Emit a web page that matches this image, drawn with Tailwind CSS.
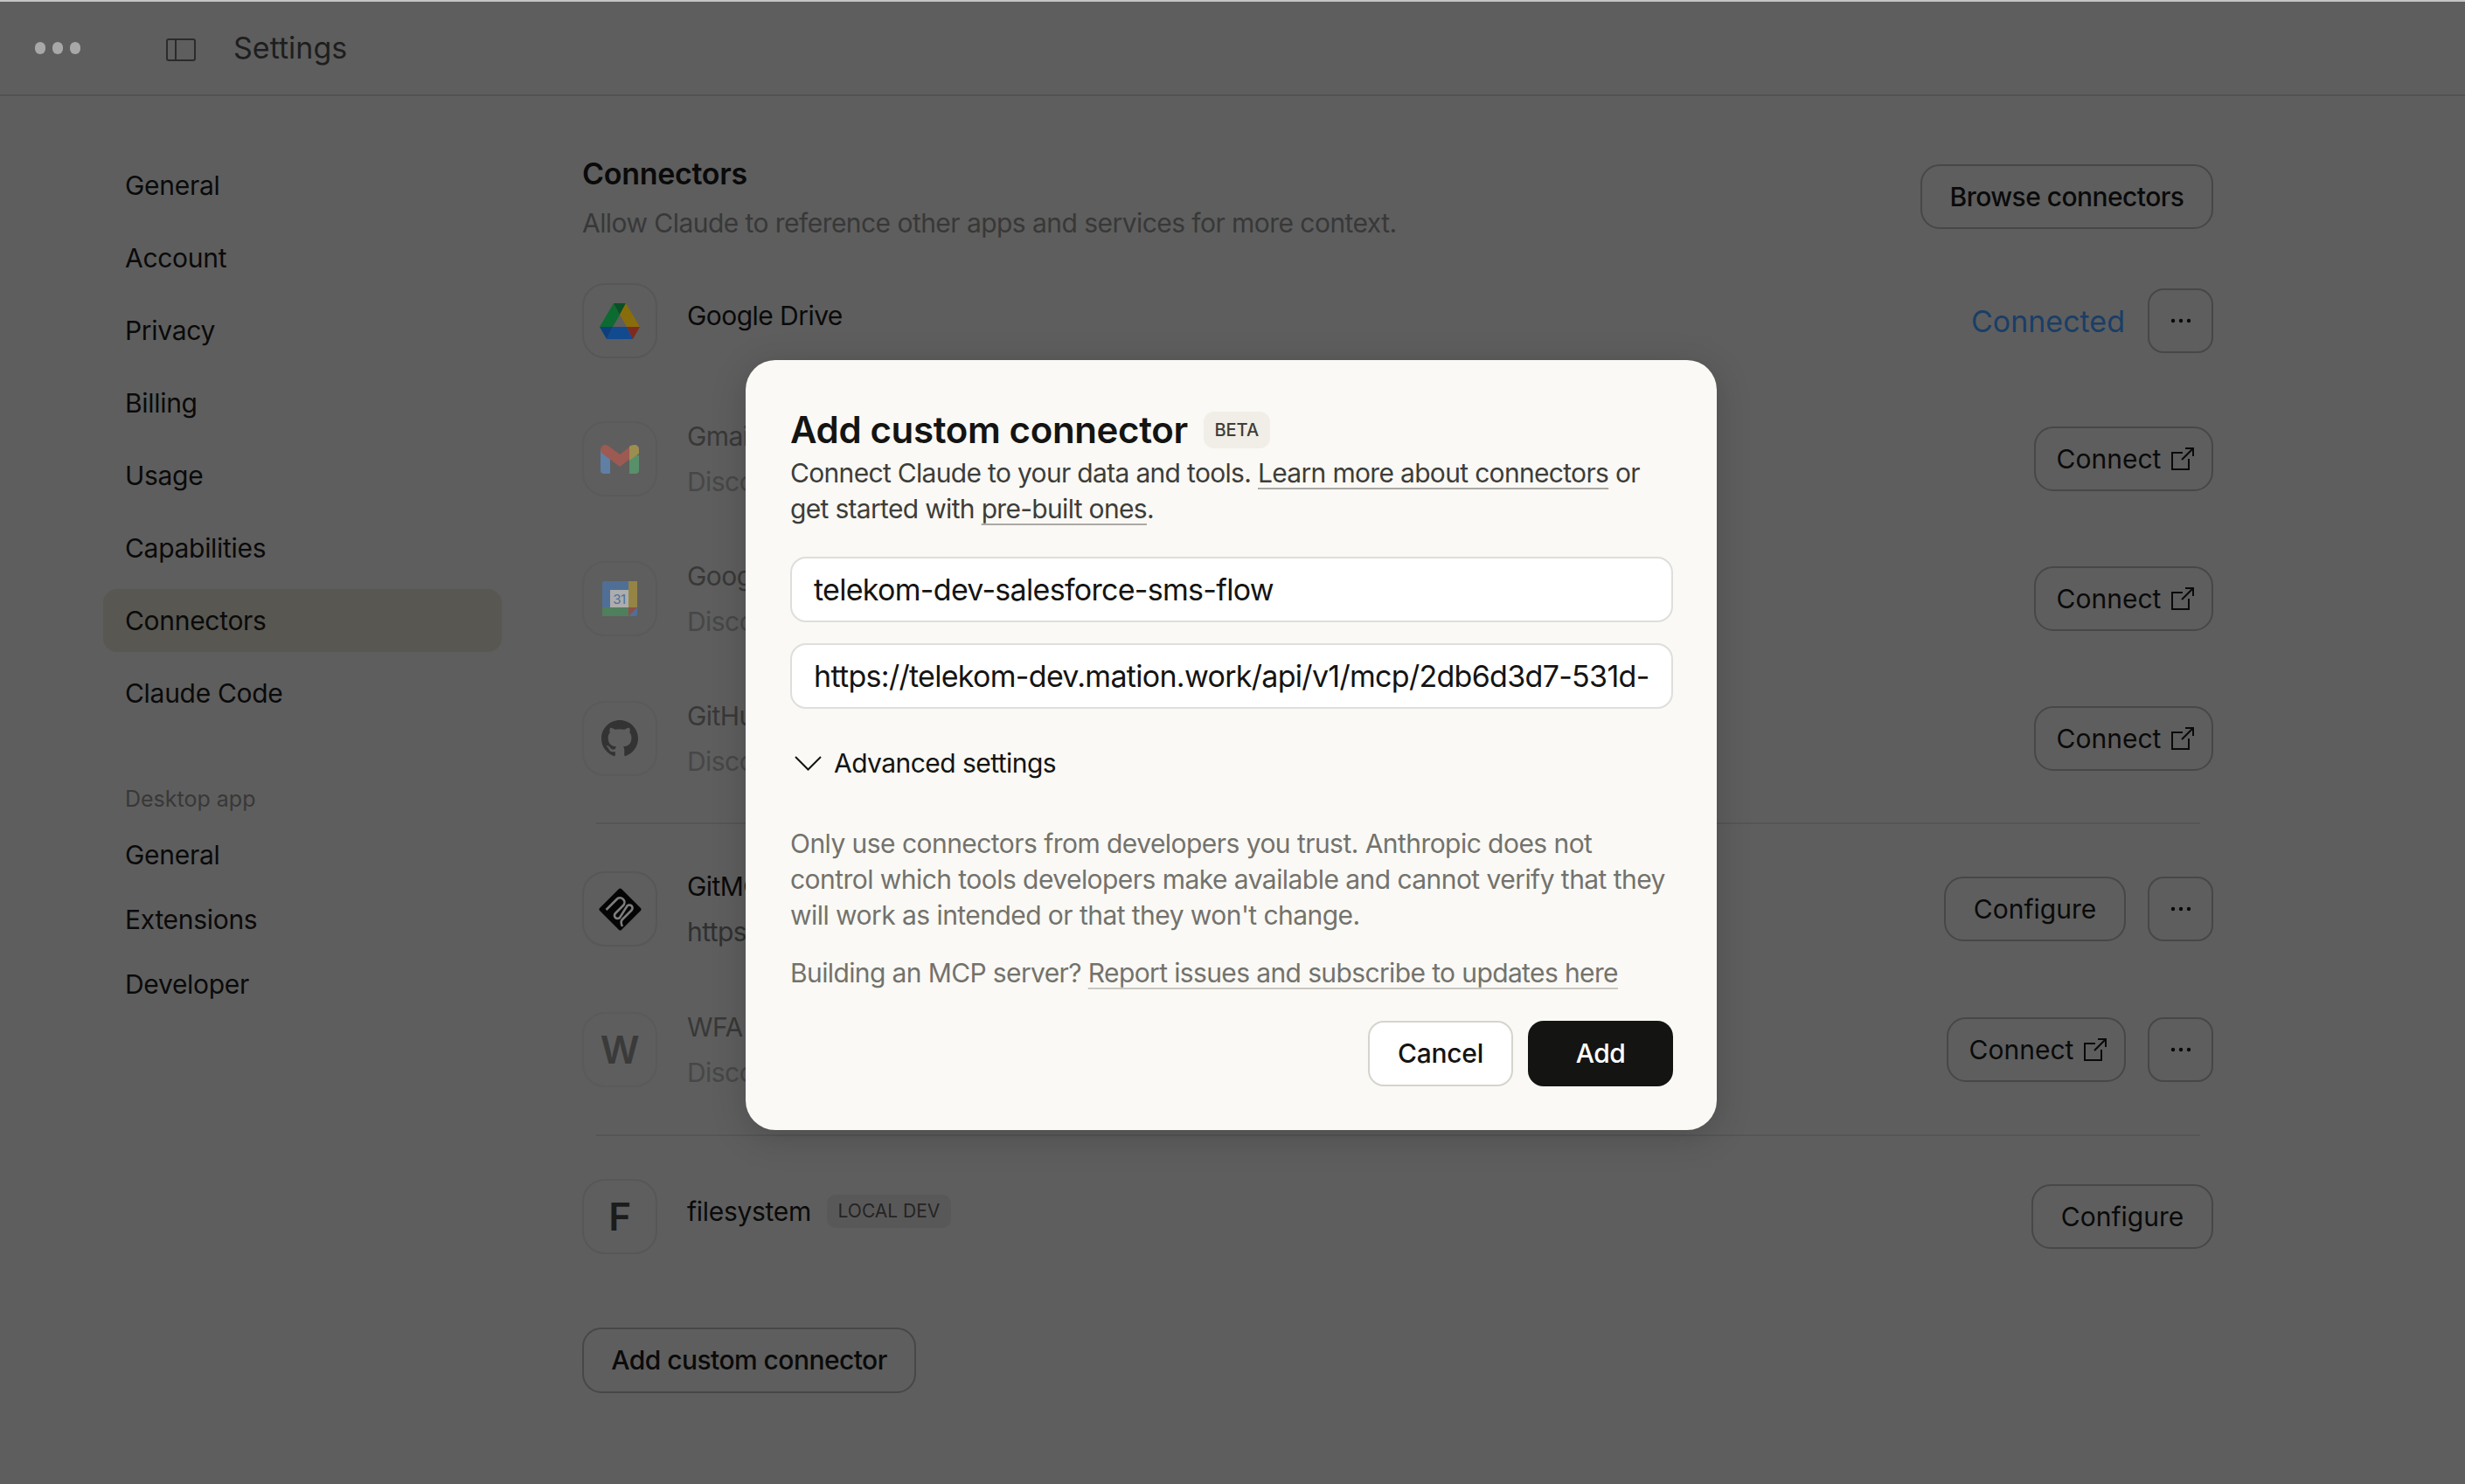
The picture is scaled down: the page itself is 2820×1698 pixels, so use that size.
<!DOCTYPE html>
<html lang="en">
<head>
<meta charset="utf-8">
<title>Settings</title>
<script src="https://cdn.jsdelivr.net/npm/@tailwindcss/browser@4"></script>
</head>
<body class="m-0 overflow-hidden bg-[#5e5e5e] font-['Inter','Noto_Sans',sans-serif] tracking-[-0.55px] text-[#0a0a0a]">
<div class="relative flex h-[1698px] w-[2820px] flex-col border-t-2 border-[#c4c4c4]">

  <header class="flex h-[108px] shrink-0 items-center border-b-2 border-[#525252]">
    <div class="ml-[40px] flex w-[150px] gap-[8px]">
      <span class="h-[14px] w-[12px] rounded-full bg-[#a8a8a8]"></span>
      <span class="h-[14px] w-[12px] rounded-full bg-[#a8a8a8]"></span>
      <span class="h-[14px] w-[12px] rounded-full bg-[#a8a8a8]"></span>
    </div>
    <svg class="mt-[4px] h-[26px] w-[34px]" viewBox="0 0 34 26" fill="none" stroke="#2b2b2b" stroke-width="2"><rect x="1" y="1" width="32" height="24" rx="2"/><path d="M11 1v24"/></svg>
    <span class="ml-[43px] text-[34px] leading-none tracking-[0px] text-[#1e1e1e]">Settings</span>
  </header>

  <div class="flex flex-1">
    <nav class="w-[666px] shrink-0 pl-[118px] pt-[66px] text-[30px] tracking-[-0.3px]">
      <div class="w-[456px]">
        <a class="flex h-[72px] items-center pl-[25px]">General</a>
        <a class="mt-[11px] flex h-[72px] items-center pl-[25px]">Account</a>
        <a class="mt-[11px] flex h-[72px] items-center pl-[25px]">Privacy</a>
        <a class="mt-[11px] flex h-[72px] items-center pl-[25px]">Billing</a>
        <a class="mt-[11px] flex h-[72px] items-center pl-[25px]">Usage</a>
        <a class="mt-[11px] flex h-[72px] items-center pl-[25px]">Capabilities</a>
        <a class="mt-[11px] flex h-[72px] items-center rounded-[16px] bg-[#585751] pl-[25px]">Connectors</a>
        <a class="mt-[11px] flex h-[72px] items-center pl-[25px]">Claude Code</a>
        <p class="mt-[69px] pl-[25px] text-[25px] leading-[32px] tracking-[0px] text-[#383838]">Desktop app</p>
        <a class="mt-[16px] flex h-[64px] items-center pl-[25px]">General</a>
        <a class="mt-[10px] flex h-[64px] items-center pl-[25px]">Extensions</a>
        <a class="mt-[10px] flex h-[64px] items-center pl-[25px]">Developer</a>
      </div>
    </nav>

    <main class="w-[1866px] shrink-0 pt-[78px]">
      <div class="flex h-[74px] items-start justify-between">
        <div class="-mt-[9px]">
          <h1 class="text-[34px] font-semibold leading-[40px] tracking-[-0.3px]">Connectors</h1>
          <p class="mt-[16px] text-[30px] leading-[40px] text-[#383838]">Allow Claude to reference other apps and services for more context.</p>
        </div>
        <button class="h-[74px] w-[335px] rounded-[22px] border-2 border-[#474747] text-[30px] font-medium">Browse connectors</button>
      </div>

      <div class="mt-[62px] flex h-[86px] items-center justify-between">
        <div class="flex items-center">
          <div class="flex h-[86px] w-[86px] items-center justify-center rounded-[26px] border-2 border-[#575757]">
            <svg class="h-[41px] w-[46px]" viewBox="0 0 46 41"><path d="M16 0 0 27h15l8-14z" fill="#0b6b30"/><path d="M16 0h14l-7 13z" fill="#0a4f26"/><path d="M30 0l16 27H31l-8-14z" fill="#8a6d0b"/><path d="M8 41l7-14h16l7 14z" fill="#124a90"/><path d="M0 27h15L8 41z" fill="#0d3f7c"/><path d="M31 27h15l-8 14z" fill="#7f2a1e"/></svg>
          </div>
          <span class="mb-[12px] ml-[34px] text-[30px] leading-[40px]">Google Drive</span>
        </div>
        <div class="flex items-center gap-[26px]">
          <span class="text-[34px] tracking-[0px] text-[#1a3e66]">Connected</span>
          <button class="flex h-[74px] w-[75px] items-center justify-center rounded-[18px] border-2 border-[#474747]"><svg class="h-[6px] w-[24px]" viewBox="0 0 24 6" fill="#0a0a0a"><circle cx="3" cy="3" r="2.2"/><circle cx="12" cy="3" r="2.2"/><circle cx="21" cy="3" r="2.2"/></svg></button>
        </div>
      </div>

      <div class="mt-[72px] flex h-[86px] items-center justify-between">
        <div class="flex items-center">
          <div class="flex h-[86px] w-[86px] items-center justify-center rounded-[26px] border-2 border-[#5a5a5a]">
            <svg class="h-[33px] w-[44px]" viewBox="0 0 44 33"><path d="M0 6h11v27H4q-4 0-4-4z" fill="#5f7fa5"/><path d="M33 12h11v17q0 4-4 4h-7z" fill="#58906a"/><path d="M5.500 5.500 22 18 38.500 5.500" fill="none" stroke="#9c5a52" stroke-width="11" stroke-linecap="round" stroke-linejoin="miter"/><path d="M33 1.500Q36 0 38.500 0 44 0 44 5.500V10l-11 8z" fill="#9c8e50"/></svg>
          </div>
          <div class="ml-[34px] text-[30px] leading-[40px] text-[#383838]"><p>Gmail</p><p class="mt-[12px] text-[#474747]">Discover</p></div>
        </div>
        <button class="flex h-[74px] w-[205px] items-center justify-center gap-[12px] rounded-[22px] border-2 border-[#474747] pl-[4px] text-[30px] tracking-[0px]">Connect <svg class="h-[26px] w-[26px]" viewBox="0 0 26 26" fill="none" stroke="#0a0a0a" stroke-width="2"><path d="M13 6H1v19h19V13M12 14 25 1M16 1h9v9"/></svg></button>
      </div>

      <div class="mt-[74px] flex h-[86px] items-center justify-between">
        <div class="flex items-center">
          <div class="flex h-[86px] w-[86px] items-center justify-center rounded-[26px] border-2 border-[#5a5a5a]">
            <svg class="h-[40px] w-[40px]" viewBox="0 0 40 40"><rect width="40" height="40" rx="2" fill="#4f6f96"/><rect x="30" width="10" height="30" fill="#958444"/><rect y="30" width="30" height="10" fill="#4f7f5c"/><path d="M30 30h10L30 40z" fill="#8f4f46"/><rect x="9" y="10" width="21" height="20" fill="#adadad"/><text x="19.500" y="26" text-anchor="middle" font-size="15" font-family="Inter" fill="#4f719d">31</text></svg>
          </div>
          <div class="ml-[34px] text-[30px] leading-[40px] text-[#383838]"><p>Google Calendar</p><p class="mt-[12px] text-[#474747]">Discover</p></div>
        </div>
        <button class="flex h-[74px] w-[205px] items-center justify-center gap-[12px] rounded-[22px] border-2 border-[#474747] pl-[4px] text-[30px] tracking-[0px]">Connect <svg class="h-[26px] w-[26px]" viewBox="0 0 26 26" fill="none" stroke="#0a0a0a" stroke-width="2"><path d="M13 6H1v19h19V13M12 14 25 1M16 1h9v9"/></svg></button>
      </div>

      <div class="mt-[74px] flex h-[86px] items-center justify-between">
        <div class="flex items-center">
          <div class="flex h-[86px] w-[86px] items-center justify-center rounded-[26px] border-2 border-[#5a5a5a]">
            <svg class="h-[42px] w-[42px]" viewBox="0 0 16 16" fill="#333"><path d="M8 0C3.58 0 0 3.58 0 8c0 3.54 2.29 6.53 5.47 7.59.4.07.55-.17.55-.38 0-.19-.01-.82-.01-1.49-2.01.37-2.53-.49-2.69-.94-.09-.23-.48-.94-.82-1.13-.28-.15-.68-.52-.01-.53.63-.01 1.08.58 1.23.82.72 1.21 1.87.87 2.33.66.07-.52.28-.87.51-1.07-1.78-.2-3.64-.89-3.64-3.95 0-.87.31-1.59.82-2.15-.08-.2-.36-1.02.08-2.12 0 0 .67-.21 2.2.82.64-.18 1.32-.27 2-.27s1.36.09 2 .27c1.53-1.04 2.2-.82 2.2-.82.44 1.1.16 1.92.08 2.12.51.56.82 1.27.82 2.15 0 3.07-1.87 3.75-3.65 3.95.29.25.54.73.54 1.48 0 1.07-.01 1.93-.01 2.2 0 .21.15.46.55.38A8.01 8.01 0 0 0 16 8c0-4.42-3.58-8-8-8z"/></svg>
          </div>
          <div class="ml-[34px] text-[30px] leading-[40px] text-[#383838]"><p>GitHub</p><p class="mt-[12px] text-[#474747]">Discover</p></div>
        </div>
        <button class="flex h-[74px] w-[205px] items-center justify-center gap-[12px] rounded-[22px] border-2 border-[#474747] pl-[4px] text-[30px] tracking-[0px]">Connect <svg class="h-[26px] w-[26px]" viewBox="0 0 26 26" fill="none" stroke="#0a0a0a" stroke-width="2"><path d="M13 6H1v19h19V13M12 14 25 1M16 1h9v9"/></svg></button>
      </div>

      <div class="ml-[16px] mr-[15px] mt-[53px] h-[2px] bg-[#555555]"></div>

      <div class="mt-[54px] flex h-[86px] items-center justify-between">
        <div class="flex items-center">
          <div class="flex h-[86px] w-[86px] items-center justify-center rounded-[26px] border-2 border-[#575757]">
            <svg class="h-[49px] w-[49px]" viewBox="0 0 49 49"><path d="M24.500 2.500 46.500 24.500 24.500 46.500 2.500 24.500z" fill="#050505" stroke="#050505" stroke-width="4" stroke-linejoin="round"/><path d="M8.500 25 20.500 13a5 5 0 0 1 7.500 7L19 29a3.500 3.500 0 0 0 5 5L32.500 20.500a3.500 3.500 0 0 1 5 5L27 36c-2 2-1.500 5 0 8" fill="none" stroke="#7d7d7d" stroke-width="2.600"/></svg>
          </div>
          <div class="ml-[34px] text-[30px] leading-[40px]"><p>GitMCP</p><p class="mt-[12px] text-[#303030]">https://gitmcp.io</p></div>
        </div>
        <div class="flex items-center gap-[25px]">
          <button class="h-[74px] w-[208px] rounded-[22px] border-2 border-[#474747] text-[30px] tracking-[0px]">Configure</button>
          <button class="flex h-[74px] w-[75px] items-center justify-center rounded-[18px] border-2 border-[#474747]"><svg class="h-[6px] w-[24px]" viewBox="0 0 24 6" fill="#0a0a0a"><circle cx="3" cy="3" r="2.2"/><circle cx="12" cy="3" r="2.2"/><circle cx="21" cy="3" r="2.2"/></svg></button>
        </div>
      </div>

      <div class="mt-[75px] flex h-[86px] items-center justify-between">
        <div class="flex items-center">
          <div class="flex h-[86px] w-[86px] items-center justify-center rounded-[26px] border-2 border-[#5a5a5a] text-[44px] font-semibold text-[#3a3a3a]">W</div>
          <div class="ml-[34px] text-[30px] leading-[40px] text-[#383838]"><p>WFA</p><p class="mt-[12px] text-[#474747]">Discover</p></div>
        </div>
        <div class="flex items-center gap-[25px]">
          <button class="flex h-[74px] w-[205px] items-center justify-center gap-[12px] rounded-[22px] border-2 border-[#474747] pl-[4px] text-[30px] tracking-[0px]">Connect <svg class="h-[26px] w-[26px]" viewBox="0 0 26 26" fill="none" stroke="#0a0a0a" stroke-width="2"><path d="M13 6H1v19h19V13M12 14 25 1M16 1h9v9"/></svg></button>
          <button class="flex h-[74px] w-[75px] items-center justify-center rounded-[18px] border-2 border-[#474747]"><svg class="h-[6px] w-[24px]" viewBox="0 0 24 6" fill="#0a0a0a"><circle cx="3" cy="3" r="2.2"/><circle cx="12" cy="3" r="2.2"/><circle cx="21" cy="3" r="2.2"/></svg></button>
        </div>
      </div>

      <div class="ml-[16px] mr-[15px] mt-[54px] h-[2px] bg-[#555555]"></div>

      <div class="mt-[49px] flex h-[86px] items-center justify-between">
        <div class="flex items-center">
          <div class="flex h-[86px] w-[86px] items-center justify-center rounded-[26px] border-2 border-[#575757] text-[44px] font-semibold text-[#1c1c1c]">F</div>
          <span class="mb-[12px] ml-[34px] text-[30px] leading-[40px] tracking-[-0.3px]">filesystem</span>
          <span class="mb-[12px] ml-[18px] flex h-[38px] w-[142px] items-center justify-center rounded-[10px] bg-[#595858] text-[21px] tracking-[0px] text-[#242424]">LOCAL DEV</span>
        </div>
        <button class="h-[74px] w-[208px] rounded-[22px] border-2 border-[#474747] text-[30px] tracking-[0px]">Configure</button>
      </div>

      <button class="mt-[84px] h-[75px] w-[382px] rounded-[22px] border-2 border-[#474747] text-[30px] font-medium">Add custom connector</button>
    </main>
  </div>

  <section class="absolute left-[853px] top-[410px] h-[881px] w-[1111px] rounded-[34px] bg-[#faf9f5] pl-[51px] pr-[50px] shadow-[0_8px_40px_rgba(0,0,0,0.18)]">
    <div class="flex items-center pt-[59px]">
      <h2 class="text-[42px] font-semibold leading-[42px] tracking-[-0.36px] text-[#141413]">Add custom connector</h2>
      <span class="ml-[18px] flex h-[42px] w-[76px] items-center justify-center rounded-[12px] bg-[#f0eee6] text-[20px] font-medium tracking-[0px] text-[#3d3d3a]">BETA</span>
    </div>
    <p class="mt-[8px] text-[30px] leading-[41px] tracking-[-0.68px] text-[#3d3d3a]">Connect Claude to your data and tools. <a class="underline decoration-[#aaa9a3] decoration-2 underline-offset-[6px]">Learn more about connectors</a> or get started with <a class="underline decoration-[#aaa9a3] decoration-2 underline-offset-[6px]">pre-built ones</a>.</p>
    <input readonly value="telekom-dev-salesforce-sms-flow" class="mt-[34px] block h-[75px] w-full rounded-[18px] border-2 border-[#dededa] bg-white px-[25px] text-[34px] tracking-[-0.7px] text-[#141413] outline-none">
    <input readonly value="https://telekom-dev.mation.work/api/v1/mcp/2db6d3d7-531d-4a2c-9f10" class="mt-[24px] block h-[75px] w-full rounded-[18px] border-2 border-[#dededa] bg-white px-[25px] text-[34px] tracking-[-0.7px] text-[#141413] outline-none">
    <div class="mt-[42px] flex h-[40px] items-center text-[30px] text-[#141413]">
      <svg class="ml-[4px] h-[18px] w-[33px]" viewBox="0 0 33 18" fill="none" stroke="#141413" stroke-width="2"><path d="M2 2l14.500 14.500L31 2"/></svg>
      <span class="ml-[13px]">Advanced settings</span>
    </div>
    <p class="mt-[52px] text-[30px] leading-[41px] text-[#73726c]">Only use connectors from developers you trust. Anthropic does not control which tools developers make available and cannot verify that they will work as intended or that they won't change.</p>
    <p class="mt-[25px] text-[30px] leading-[41px] tracking-[-0.62px] text-[#73726c]">Building an MCP server? <a class="underline decoration-[#c8c7c1] decoration-2 underline-offset-[6px]">Report issues and subscribe to updates here</a></p>
    <div class="mt-[34px] flex justify-end gap-[17px]">
      <button class="h-[75px] w-[166px] rounded-[18px] border-2 border-[#d5d4cd] bg-white text-[30px] font-medium tracking-[-0.3px] text-[#141413]">Cancel</button>
      <button class="h-[75px] w-[166px] rounded-[18px] bg-[#141413] text-[30px] font-medium text-white">Add</button>
    </div>
  </section>
</div>
</body>
</html>
